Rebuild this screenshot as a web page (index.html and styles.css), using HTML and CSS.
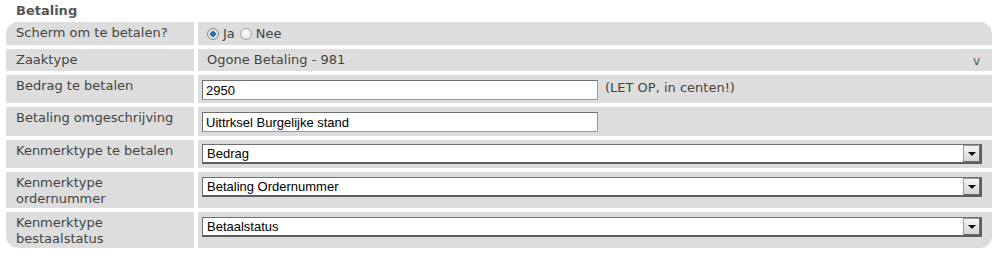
FILE: index.html
```html
<!DOCTYPE html>
<html lang="nl">
<head>
<meta charset="utf-8">
<title>Betaling</title>
<link rel="stylesheet" href="styles.css">
</head>
<body>
<h3 class="title">Betaling</h3>
<div class="form">
  <div class="lbl r-tl">Scherm om te betalen?</div>
  <div class="val r-tr row-radio">
    <label class="opt"><input type="radio" name="scherm" checked><span>Ja</span></label>
    <label class="opt"><input type="radio" name="scherm"><span>Nee</span></label>
  </div>

  <div class="lbl">Zaaktype</div>
  <div class="val row-text"><span class="plain">Ogone Betaling - 981</span><span class="vmark">v</span></div>

  <div class="lbl">Bedrag te betalen</div>
  <div class="val row-input"><input class="txt" type="text" value="2950"><span class="note">(LET OP, in centen!)</span></div>

  <div class="lbl">Betaling omgeschrijving</div>
  <div class="val row-input"><input class="txt" type="text" value="Uittrksel Burgelijke stand"></div>

  <div class="lbl">Kenmerktype te betalen</div>
  <div class="val row-sel"><div class="sel"><span class="sel-text">Bedrag</span><span class="sel-btn"><span class="tri"></span></span></div></div>

  <div class="lbl">Kenmerktype<br>ordernummer</div>
  <div class="val row-sel2"><div class="sel"><span class="sel-text">Betaling Ordernummer</span><span class="sel-btn"><span class="tri"></span></span></div></div>

  <div class="lbl r-bl">Kenmerktype<br>bestaalstatus</div>
  <div class="val row-sel2 r-br"><div class="sel"><span class="sel-text">Betaalstatus</span><span class="sel-btn"><span class="tri"></span></span></div></div>
</div>
</body>
</html>
```

FILE: styles.css
```css
html, body {
  margin: 0;
  padding: 0;
  background: #ffffff;
}
body {
  font-family: "DejaVu Sans", Verdana, sans-serif;
  font-size: 13px;
  color: #444444;
}
.title {
  margin: 0;
  padding: 3px 0 0 16px;
  height: 22px;
  box-sizing: border-box;
  font-size: 13px;
  font-weight: bold;
  color: #555555;
  line-height: 16px;
}
.form {
  margin-left: 6px;
  width: 986px;
  display: grid;
  grid-template-columns: 188px 794px;
  grid-template-rows: 23px 22px 28px 29px 28px 36px 36px;
  column-gap: 4px;
  row-gap: 4px;
}
.lbl, .val {
  background: #dddddd;
  box-sizing: border-box;
  overflow: hidden;
}
.lbl {
  padding: 3px 4px 0 10px;
  line-height: 16px;
  color: #444444;
}
.r-tl { border-top-left-radius: 12px; }
.r-tr { border-top-right-radius: 12px; }
.r-bl { border-bottom-left-radius: 12px; }
.r-br { border-bottom-right-radius: 12px; }

.val {
  padding: 4px 4px 0 4px;
  display: flex;
  align-items: flex-start;
}
.row-radio {
  padding-top: 5px;
  padding-left: 9px;
  gap: 5px;
}
.opt {
  display: flex;
  align-items: center;
  gap: 4px;
  line-height: 14px;
}
.opt input {
  appearance: none;
  -webkit-appearance: none;
  margin: 0;
  width: 12px;
  height: 12px;
  border-radius: 50%;
  border: 1px solid #a6a6a6;
  background: radial-gradient(circle at 50% 40%, #ffffff 0, #f2f2f2 45%, #d4d4d4 100%);
  box-sizing: border-box;
}
.opt input:checked {
  border-color: #8a8a8a;
  background: radial-gradient(circle at 50% 50%, #2c8fd0 0, #1a5f98 2.5px, #e8e8e8 3px, #d0d0d0 100%);
}
.row-text {
  padding-left: 9px;
  padding-top: 3px;
  justify-content: space-between;
  line-height: 16px;
}
.vmark {
  font-size: 12px;
  color: #555555;
  padding-right: 8px;
  padding-top: 1px;
}
.row-input {
  padding-top: 5px;
}
.txt {
  margin: 0;
  width: 396px;
  height: 20px;
  box-sizing: border-box;
  border: 1px solid #6f6f6f;
  border-right-color: #999999;
  border-bottom-color: #999999;
  padding: 1px 3px;
  font-family: "Liberation Sans", Arial, sans-serif;
  font-size: 13px;
  color: #000000;
  background: #ffffff;
  outline: none;
}
.note {
  padding-left: 7px;
  line-height: 16px;
  color: #444444;
}
.row-sel {
  padding-top: 4px;
}
.row-sel2 {
  padding-top: 5px;
}
.sel {
  width: 780px;
  height: 20px;
  box-sizing: border-box;
  border-style: solid;
  border-width: 1px 2px 2px 1px;
  border-color: #707070 #5e5e5e #5e5e5e #707070;
  background: #ffffff;
  display: flex;
  align-items: stretch;
  justify-content: space-between;
  font-family: "Liberation Sans", Arial, sans-serif;
  font-size: 13px;
  color: #000000;
}
.sel-text {
  padding-left: 4px;
  line-height: 17px;
}
.sel-btn {
  width: 15px;
  border: 1px solid #9a9a9a;
  border-right-color: #6f6f6f;
  border-bottom-color: #6f6f6f;
  background: linear-gradient(#f4f4f4, #d6d6d6);
  display: flex;
  align-items: center;
  justify-content: center;
}
.tri {
  width: 0;
  height: 0;
  border-left: 4px solid transparent;
  border-right: 4px solid transparent;
  border-top: 4px solid #111111;
}
```
